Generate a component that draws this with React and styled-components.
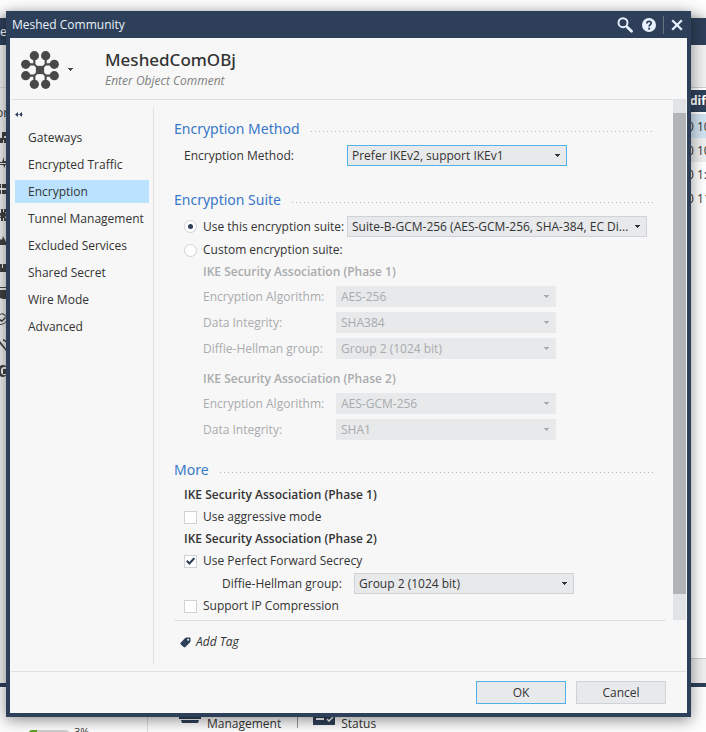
import React, { useState } from "react";
import styled, { createGlobalStyle, css } from "styled-components";

const navy = "#2e4059";
const paper = "#f7f7f7";
const rule = "#dfe1e4";
const field = "#e7e9eb";
const sky = "#53b1e8";

const GlobalStyle = createGlobalStyle`
  *, *::before, *::after { box-sizing: border-box; }
  html, body { margin: 0; background: #fdfdfd; }
  body, button, select, input {
    font-family: "Open Sans", "Noto Sans", sans-serif;
    font-size: 12px;
    line-height: 18px;
    color: #333;
  }
`;

const Page = styled.div`
  position: relative;
  display: flow-root;
  min-height: 100vh;
  overflow: hidden;
`;

/* ---- application window behind the dialog ---- */

const Backdrop = styled.div`
  position: absolute;
  inset: 0;
  display: flex;
  flex-direction: column;
  padding-top: 18px;
`;

const BackWindow = styled.div`
  flex: 1;
  display: flex;
  flex-direction: column;
  border-bottom: 4px solid ${navy};
  background: #efefef;
  box-shadow: 0 0 12px rgba(0, 0, 0, 0.35);
`;

const BackTitle = styled.div`
  flex: none;
  height: 27px;
  line-height: 27px;
  background: ${navy};
  color: #fff;
`;

const BackBody = styled.div`
  flex: 1;
  display: flex;
  justify-content: space-between;
`;

const BackList = styled.div`
  display: flex;
  flex-direction: column;
  align-items: flex-start;
  width: 160px;
  margin-top: 42px;
  border-top: 1px solid #d5d7da;
  padding-top: 16px;
`;

const BackListLabel = styled.div`
  height: 20px;
  margin-left: -4px;
`;

const BackGlyph = styled.svg`
  display: block;
  width: 8px;
  height: 12px;
  margin: 7px 0;
  color: #414141;
`;

const BackTable = styled.div`
  display: flex;
  flex-direction: column;
  width: 24px;
  white-space: nowrap;
  background: #fff;
`;

const BackToolbar = styled.div`
  height: 43px;
  border-bottom: 1px solid #c9ccd0;
  background: #efefef;
`;

const BackHead = styled.div`
  height: 22px;
  margin: 2px 0;
  line-height: 22px;
  padding-left: 8px;
  background: ${navy};
  color: #fff;
  font-weight: 700;
`;

const BackCell = styled.div`
  height: 24px;
  padding-left: 5px;
  line-height: 26px;
  background: ${(p) => p.$fill || "#fff"};
`;

const BackStatus = styled.div`
  height: 25px;
  margin-top: auto;
  border-top: 1px solid #c9ccd0;
  background: #eee;
`;

const Desktop = styled.div`
  flex: none;
  display: flex;
  align-items: flex-end;
  height: 45px;
  background: #fdfdfd;
`;

const Meter = styled.div`
  display: flex;
  align-items: flex-start;
  gap: 5px;
  width: 148px;
  height: 45px;
  padding: 36px 0 0 29px;
  border-right: 1px solid #dcdcdc;
  font-size: 11px;
`;

const MeterBar = styled.div`
  width: 40px;
  height: 6px;
  margin-top: 7px;
  border-radius: 3px;
  overflow: hidden;
  background: #cfcfcf;
`;

const MeterFill = styled.div`
  width: 20%;
  height: 100%;
  background: #5aa51e;
`;

const Shortcut = styled.div`
  display: flex;
  align-items: flex-end;
  gap: 6px;
  height: 45px;
  padding-left: 31px;
  line-height: 16px;
`;

const ShortcutIcon = styled.svg`
  display: block;
  width: 22px;
  height: 20px;
`;

const Divider = styled.div`
  width: 1px;
  height: 18px;
  margin: 0 -16px 4px 16px;
  background: #999;
`;

/* ---- dialog ---- */

const Dialog = styled.section`
  position: relative;
  display: flex;
  flex-direction: column;
  margin: 11px 15px 15px 6px;
  border: solid ${navy};
  border-width: 0 4px 4px;
  background: ${paper};
  box-shadow: 0 3px 14px rgba(0, 0, 0, 0.45);
`;

const TitleBar = styled.header`
  display: flex;
  align-items: center;
  height: 27px;
  padding-left: 2px;
  background: ${navy};
  color: #e9f1fc;
`;

const TitleText = styled.span`
  flex: 1;
`;

const TitleButton = styled.button`
  display: grid;
  place-items: center;
  width: 24px;
  height: 27px;
  padding: 0;
  border: 0;
  background: none;
  color: #e9f1ff;
`;

const CloseButton = styled(TitleButton)`
  width: 20px;
  margin-left: 3px;
`;

const TitleDivider = styled.span`
  width: 1px;
  height: 18px;
  margin-left: 2px;
  background: #65727f;
`;

const ObjectHeader = styled.div`
  display: flex;
  align-items: center;
  height: 62px;
  margin: 0 1px;
  padding-left: 10px;
  border-bottom: 1px solid ${rule};
`;

const ObjectButton = styled.button`
  display: flex;
  align-items: center;
  gap: 9px;
  width: 84px;
  padding: 2px 0 0;
  border: 0;
  background: none;
  color: #484848;
`;

const ObjectName = styled.h1`
  margin: 0;
  font-family: "Noto Sans", "Open Sans", sans-serif;
  font-size: 17px;
  line-height: 24px;
  font-weight: 500;
`;

const ObjectComment = styled.div`
  font-style: italic;
  color: #808080;
`;

const Body = styled.div`
  display: grid;
  grid-template-columns: 144px minmax(0, 1fr) 13px;
  margin-right: 1px;
`;

const Sidebar = styled.nav`
  margin-top: 7px;
  margin-bottom: 7px;
  padding: 0 4px 0 5px;
  border-right: 1px solid ${rule};
`;

const CollapseButton = styled.button`
  display: flex;
  align-items: center;
  width: 16px;
  height: 15px;
  padding: 0;
  margin-bottom: 4px;
  border: 0;
  background: none;
`;

const NavLink = styled.a`
  display: block;
  height: 23px;
  margin-bottom: 4px;
  padding-left: 13px;
  line-height: 23px;
  color: #333;
  text-decoration: none;
  white-space: nowrap;
  background: ${(p) => (p.$active ? "#bbe3ff" : "none")};
`;

const Main = styled.div`
  padding: 19px 7px 0 20px;
`;

const Panel = styled.form`
  padding: 0 13px 5px 0;
  border-bottom: 1px solid ${rule};
`;

const Section = styled.section`
  display: flex;
  flex-direction: column;
  gap: 4px;
  margin-top: ${(p) => p.$top || 0}px;
`;

const SectionTitle = styled.h2`
  display: flex;
  align-items: center;
  gap: 11px;
  margin: 0 0 2px;
  font-family: "Noto Sans", "Open Sans", sans-serif;
  font-size: 14px;
  line-height: 20px;
  font-weight: 400;
  color: #3a78c8;

  &::after {
    content: "";
    flex: 1;
    height: 1px;
    margin-top: 4px;
    background: repeating-linear-gradient(90deg, #b4b4b4 0 1px, transparent 1px 4px);
  }
`;

const Row = styled.div`
  display: grid;
  grid-template-columns: ${(p) => p.$label}px minmax(0, ${(p) => p.$field || 220}px);
  align-items: center;
  min-height: 18px;
  padding-left: ${(p) => p.$indent || 10}px;
`;

const Algorithms = styled.fieldset`
  display: flex;
  flex-direction: column;
  gap: 5px;
  min-width: 0;
  margin: 0;
  padding: 0;
  border: 0;
  color: #a9abad;

  & + & {
    margin-top: 7px;
  }
`;

const SecrecyRows = styled.div`
  display: flex;
  flex-direction: column;
  gap: 3px;
`;

const GroupTitle = styled.div`
  padding-left: ${(p) => p.$indent || 10}px;
  font-weight: 600;
`;

const Choice = styled.label`
  display: flex;
  align-items: center;
  gap: 6px;
  white-space: nowrap;
`;

const mark = css`
  flex: none;
  appearance: none;
  display: grid;
  place-items: center;
  width: 13px;
  height: 13px;
  margin: 0;
  border: 1px solid #cfd2d6;
  background: #fff;
`;

const Radio = styled.input.attrs({ type: "radio" })`
  ${mark}
  border-radius: 50%;

  &:checked::before {
    content: "";
    width: 5px;
    height: 5px;
    border-radius: 50%;
    background: ${navy};
  }
`;

const CheckInput = styled.input.attrs({ type: "checkbox" })`
  ${mark}
  grid-area: 1 / 1;

  &:not(:checked) + svg {
    visibility: hidden;
  }
`;

const CheckHolder = styled.span`
  display: grid;
  place-items: center;

  svg {
    grid-area: 1 / 1;
    pointer-events: none;
  }
`;

const SelectHolder = styled.span`
  display: grid;
  align-items: center;
  color: ${(p) => (p.$disabled ? "#a9abad" : "#333")};

  svg {
    grid-area: 1 / 1;
    justify-self: end;
    margin-right: 7px;
    pointer-events: none;
  }
`;

const SelectInput = styled.select`
  grid-area: 1 / 1;
  appearance: none;
  width: 100%;
  height: 21px;
  padding: 0 16px 0 4px;
  border: 1px solid ${(p) => (p.$active ? sky : "#cfd2d6")};
  border-radius: 0;
  background: ${field};
  color: inherit;
  line-height: 19px;

  &:disabled {
    border-color: ${field};
    opacity: 1;
  }
`;

const TagButton = styled.button`
  display: flex;
  align-items: center;
  gap: 5px;
  margin: 12px 0 20px 6px;
  padding: 0;
  border: 0;
  background: none;
  font-style: italic;
`;

const ScrollTrack = styled.div`
  display: flex;
  flex-direction: column;
  margin-bottom: 51px;
  padding: 13px 0 26px;
  background: #e0e4e7;
`;

const ScrollThumb = styled.div`
  flex: 1;
  background: #b1b5b8;
`;

const Footer = styled.footer`
  display: flex;
  justify-content: flex-end;
  gap: 10px;
  margin: 0 1px;
  padding: 9px 20px;
  border-top: 1px solid ${rule};
`;

const ActionButton = styled.button`
  width: 90px;
  height: 23px;
  padding: 0;
  border: 1px solid ${(p) => (p.$primary ? sky : "#cfd2d6")};
  background: ${field};
`;

/* ---- drawings ---- */

const Caret = () => (
  <svg width="5" height="3" viewBox="0 0 5 3" shapeRendering="crispEdges" fill="currentColor" aria-hidden="true">
    <path d="M0 0h5v1H4v1H3v1H2V2H1V1H0z" />
  </svg>
);

const spokes = [
  [13, 4.6], [24, 4.6], [4.6, 13], [32.4, 13], [4.6, 24], [32.4, 24], [13, 32.4], [24, 32.4],
];

const MeshIcon = () => (
  <svg width="38" height="38" viewBox="0 0 37 37" fill="currentColor" stroke="currentColor" aria-hidden="true">
    <path
      d="M13 5v8l11 11v8M24 5v8L13 24v8M5 13h8M24 13h8M5 24h8M24 24h8"
      fill="none"
      strokeWidth="2"
    />
    <rect x="15" y="15" width="7" height="7" />
    {spokes.map(([x, y]) => (
      <circle key={`${x}-${y}`} cx={x} cy={y} r="4.5" stroke="none" />
    ))}
  </svg>
);

const SearchIcon = () => (
  <svg width="16" height="16" viewBox="0 0 16 16" fill="none" stroke="currentColor" aria-hidden="true">
    <circle cx="6" cy="5.7" r="4.5" strokeWidth="1.9" />
    <path d="M9.2 9l1.5 1.5" strokeWidth="1.8" />
    <path d="M10.6 10.4l3.9 3.9" strokeWidth="2.8" strokeLinecap="round" />
  </svg>
);

const HelpIcon = () => (
  <svg width="14" height="14" viewBox="0 0 14 14" aria-hidden="true">
    <circle cx="7" cy="7" r="7" fill="currentColor" />
    <path d="M4.9 5.5c0-3 4.5-2.8 4.3-.2C9.1 6.6 7.1 6.8 7.1 8.6" fill="none" stroke={navy} strokeWidth="1.8" />
    <path d="M6.1 9.7h2v1.8h-2z" fill={navy} />
  </svg>
);

const CloseIcon = () => (
  <svg width="12" height="12" viewBox="0 0 12 12" fill="none" stroke="currentColor" strokeWidth="2.3" aria-hidden="true">
    <path d="M1.2 1.2l9.6 9.6M10.8 1.2l-9.6 9.6" />
  </svg>
);

const CollapseIcon = () => (
  <svg width="8" height="5" viewBox="0 0 8 5" fill={navy} aria-hidden="true">
    <path d="M0 2.5L3 0v5zM4 2.5L7 0v5z" />
    <path d="M2 2h1.5v1H2zM6 2h1.5v1H6z" />
  </svg>
);

const CheckIcon = () => (
  <svg width="9" height="8" viewBox="0 0 9 8" fill="none" stroke={navy} strokeWidth="2.1" aria-hidden="true">
    <path d="M.7 3.7l2.700 2.700L8.300 1.200" />
  </svg>
);

const TagIcon = () => (
  <svg width="11" height="11" viewBox="0 0 11 11" aria-hidden="true">
    <path
      d="M5.2 1.1Q5.800.5 6.700.5H9.700q.8 0 .8.800v2.800q0 .8-.6 1.400L5.400 10q-.8.800-1.700.1L.8 7.500Q0 6.600.7 5.800z"
      fill={navy}
    />
    <circle cx="8.2" cy="2.8" r="1" fill={paper} />
  </svg>
);

const backGlyphs = [
  "M2 1h4v4H4v2h4v5H4V9H3v3H0V7h2z",
  "M4 0v4h4v2H0V5h2zM0 7h8v1H5v3L3 8H0z",
  "M0 1h1v4H0zM2 1h5v4H2zM0 7h1v4H0zM2 7h5v4H2z",
  "M1 0h2v3h1V0h2v3H5l1 2v2L5 8l1 2v2H4V9H3v3H1V9H0V8h1L0 6V4h1z",
  "M0 5l1-1 1 1 1-4 3 6v3H0z",
  "M0 3h2v4h1V3h3v4h1v4H0z",
  "M0 0h8v1H0zM0 3h8v9H3l-3-1z",
  "M0 1q4-2 6 2v1Q3 0 0 2zM0 12q4 0 6-3V8q-2 3-6 3zM0 6l2 1 3-3 1 1-4 4-2-1z",
  "M0 2l4 5 3 4-1 1-6-7zM3 0q4 1 5 5L7 6Q6 2 3 2z",
  "M0 1q3-2 6 0v1Q3 1 1 4v4q2 3 5 2v1q-4 2-6 0zM3 4h3v5H3z",
];

const SelectBox = ({ id, value, active, disabled, label }) => (
  <SelectHolder $disabled={disabled}>
    <SelectInput id={id} defaultValue={value} disabled={disabled} $active={active} aria-label={label}>
      <option>{value}</option>
    </SelectInput>
    <Caret />
  </SelectHolder>
);

const CheckBox = ({ label, checked }) => (
  <Choice>
    <CheckHolder>
      <CheckInput defaultChecked={checked} />
      <CheckIcon />
    </CheckHolder>
    {label}
  </Choice>
);

const navItems = [
  "Gateways",
  "Encrypted Traffic",
  "Encryption",
  "Tunnel Management",
  "Excluded Services",
  "Shared Secret",
  "Wire Mode",
  "Advanced",
];

const phases = [
  {
    title: "IKE Security Association (Phase 1)",
    fields: [
      ["Encryption Algorithm:", "AES-256"],
      ["Data Integrity:", "SHA384"],
      ["Diffie-Hellman group:", "Group 2 (1024 bit)"],
    ],
  },
  {
    title: "IKE Security Association (Phase 2)",
    fields: [
      ["Encryption Algorithm:", "AES-GCM-256"],
      ["Data Integrity:", "SHA1"],
    ],
  },
];

const Application = () => (
  <Backdrop aria-hidden="true">
    <BackWindow>
      <BackTitle>e</BackTitle>
      <BackBody>
        <BackList>
          <BackListLabel>or</BackListLabel>
          {backGlyphs.map((d) => (
            <BackGlyph key={d} viewBox="0 0 8 12">
              <path d={d} fill="currentColor" />
            </BackGlyph>
          ))}
        </BackList>
        <BackTable>
          <BackToolbar />
          <BackHead>difi</BackHead>
          <BackCell $fill="#cfe2ef">0 10</BackCell>
          <BackCell $fill="#eee">0 10</BackCell>
          <BackCell>0 1:</BackCell>
          <BackCell>0 11</BackCell>
          <BackStatus />
        </BackTable>
      </BackBody>
    </BackWindow>
    <Desktop>
      <Meter>
        <MeterBar>
          <MeterFill />
        </MeterBar>
        3%
      </Meter>
      <Shortcut>
        <ShortcutIcon viewBox="0 0 22 20" fill={navy}>
          <path d="M0 3h22v4H0zM2 8h18l-1 3H3z" />
        </ShortcutIcon>
        Management
      </Shortcut>
      <Divider />
      <Shortcut>
        <ShortcutIcon viewBox="0 0 22 20">
          <path d="M0 0h22v13H0z" fill={navy} />
          <path d="M3 7h8" stroke="#fff" strokeWidth="2" />
          <path d="M14 7l2 2 4-4" fill="none" stroke="#fff" strokeWidth="1.5" />
        </ShortcutIcon>
        Status
      </Shortcut>
    </Desktop>
  </Backdrop>
);

export default function App() {
  const [suite, setSuite] = useState("preset");
  const [page, setPage] = useState("Encryption");
  const custom = suite === "custom";

  return (
    <Page>
      <GlobalStyle />
      <Application />
      <Dialog role="dialog" aria-label="Meshed Community">
        <TitleBar>
          <TitleText>Meshed Community</TitleText>
          <TitleButton aria-label="Search"><SearchIcon /></TitleButton>
          <TitleButton aria-label="Help"><HelpIcon /></TitleButton>
          <TitleDivider />
          <CloseButton aria-label="Close"><CloseIcon /></CloseButton>
        </TitleBar>
        <ObjectHeader>
          <ObjectButton aria-label="Change icon">
            <MeshIcon />
            <Caret />
          </ObjectButton>
          <div>
            <ObjectName>MeshedComOBj</ObjectName>
            <ObjectComment>Enter Object Comment</ObjectComment>
          </div>
        </ObjectHeader>
        <Body>
          <Sidebar>
            <CollapseButton aria-label="Collapse"><CollapseIcon /></CollapseButton>
            {navItems.map((item) => (
              <NavLink key={item} href="#" $active={item === page} onClick={() => setPage(item)}>
                {item}
              </NavLink>
            ))}
          </Sidebar>
          <Main>
            <Panel>
              <Section>
                <SectionTitle>Encryption Method</SectionTitle>
                <Row $label={163}>
                  <label htmlFor="method">Encryption Method:</label>
                  <SelectBox id="method" value="Prefer IKEv2, support IKEv1" active />
                </Row>
              </Section>
              <Section $top={24}>
                <SectionTitle>Encryption Suite</SectionTitle>
                <Row $label={163} $field={300}>
                  <Choice>
                    <Radio name="suite" checked={!custom} onChange={() => setSuite("preset")} />
                    Use this encryption suite:
                  </Choice>
                  <SelectBox
                    id="preset"
                    label="Encryption suite"
                    value="Suite-B-GCM-256 (AES-GCM-256, SHA-384, EC Di..."
                    disabled={custom}
                  />
                </Row>
                <Row $label={163}>
                  <Choice>
                    <Radio name="suite" checked={custom} onChange={() => setSuite("custom")} />
                    Custom encryption suite:
                  </Choice>
                </Row>
                {phases.map((phase, p) => (
                  <Algorithms key={phase.title} disabled={!custom}>
                    <GroupTitle $indent={29}>{phase.title}</GroupTitle>
                    {phase.fields.map(([label, value], i) => (
                      <Row key={label} $indent={29} $label={133}>
                        <label htmlFor={`phase-${p}-${i}`}>{label}</label>
                        <SelectBox id={`phase-${p}-${i}`} value={value} disabled={!custom} />
                      </Row>
                    ))}
                  </Algorithms>
                ))}
              </Section>
              <Section $top={20}>
                <SectionTitle>More</SectionTitle>
                <GroupTitle>IKE Security Association (Phase 1)</GroupTitle>
                <Row $label={300}>
                  <CheckBox label="Use aggressive mode" />
                </Row>
                <GroupTitle>IKE Security Association (Phase 2)</GroupTitle>
                <SecrecyRows>
                  <Row $label={300}>
                    <CheckBox label="Use Perfect Forward Secrecy" checked />
                  </Row>
                  <Row $indent={48} $label={132}>
                    <label htmlFor="pfs-group">Diffie-Hellman group:</label>
                    <SelectBox id="pfs-group" value="Group 2 (1024 bit)" />
                  </Row>
                  <Row $label={300}>
                    <CheckBox label="Support IP Compression" />
                  </Row>
                </SecrecyRows>
              </Section>
            </Panel>
            <TagButton><TagIcon />Add Tag</TagButton>
          </Main>
          <ScrollTrack aria-hidden="true"><ScrollThumb /></ScrollTrack>
        </Body>
        <Footer>
          <ActionButton $primary>OK</ActionButton>
          <ActionButton>Cancel</ActionButton>
        </Footer>
      </Dialog>
    </Page>
  );
}
